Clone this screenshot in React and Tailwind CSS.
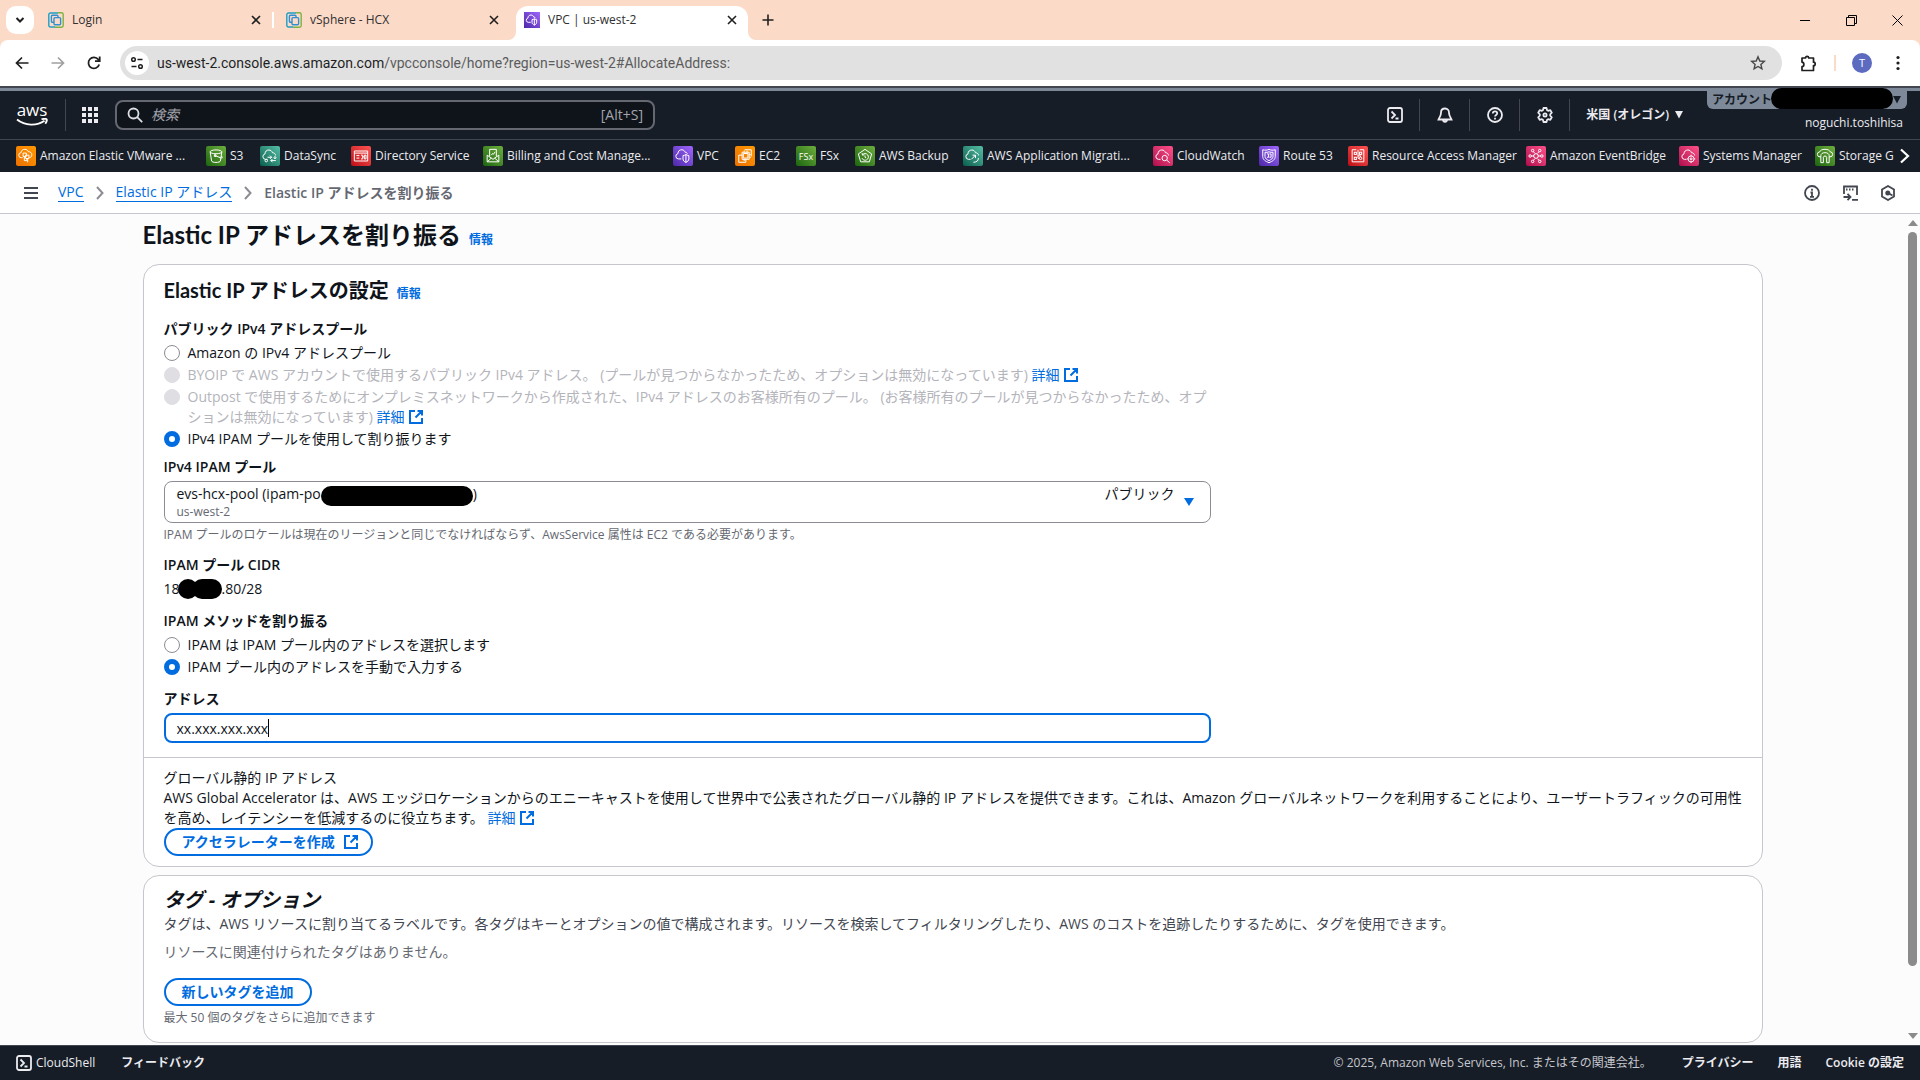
import React from "react";

const BODY_FONT = "font-['Open_Sans','Noto_Sans_CJK_JP',sans-serif]";

/* ---------- small shared drawings ---------- */

function External({ className = "" }) {
  return (
    <svg viewBox="0 0 16 16" className={"inline-block size-4 " + className} fill="none" stroke="currentColor" strokeWidth="2" aria-hidden="true">
      <path d="M7 2H2v12h12V9M9.5 2H14v4.5M14 2 7.5 8.5" />
    </svg>
  );
}

function Close() {
  return (
    <svg viewBox="0 0 10 10" className="size-2.5" fill="none" stroke="#1f1f1f" strokeWidth="1.6" aria-hidden="true">
      <path d="M1 1l8 8M9 1 1 9" />
    </svg>
  );
}

function VmIcon() {
  return (
    <svg viewBox="0 0 16 16" className="size-4 shrink-0" fill="none" strokeWidth="1.4" aria-hidden="true">
      <path d="M10 1H2.5A1.7 1.7 0 0 0 .8 2.7v10.6A1.7 1.7 0 0 0 2.5 15H7" stroke="#1d9fc4" />
      <path d="M10 .8h3.5a1.7 1.7 0 0 1 1.7 1.7v11a1.7 1.7 0 0 1-1.7 1.7H7" stroke="#7cb342" />
      <rect x="3.4" y="3.2" width="6.6" height="7" rx="1" stroke="#2f8fd0" />
      <rect x="6" y="5.6" width="6.6" height="7.2" rx="1" stroke="#2f8fd0" fill="#fcdac8" />
    </svg>
  );
}

function VpcGlyph() {
  return (
    <>
      <path d="M10 15.5H6.4a3.2 3.2 0 0 1-.5-6.3C5.9 6 8 4.5 10.5 4.5c2 0 3.5 1.2 4 3 1.3 0 2.4.7 2.9 1.8" />
      <path d="M12 11.5c1.6-.2 2.7-.6 3.5-1.3.8.7 1.9 1.1 3.5 1.3v4c0 2-1.6 3.3-3.5 4.2-1.9-.9-3.5-2.2-3.5-4.2zM15.5 10.2v9.5" />
    </>
  );
}

const CLOUD = "M9 16H6.6a3.3 3.3 0 0 1-.6-6.5C6 6.5 8.1 4.8 10.6 4.8c2.1 0 3.7 1.2 4.3 3.2 2.3.1 3.6 1.5 3.8 3.3";

const glyphs = {
  evs: (
    <>
      <path d="M8 14H6.5a3 3 0 0 1-.4-6C6.3 5.3 8.2 4 10.6 4c2 0 3.5 1 4.1 2.8 2.6 0 4.3 1.5 4.3 3.7 0 2-1.3 3.4-3 3.5" />
      <path d="M8.5 8.5h4v4h-4zM11.5 11h4v4h-4zM10 12.5v5h3v-2.5M14 15v4.5" />
    </>
  ),
  s3: (
    <>
      <ellipse cx="12" cy="7" rx="7" ry="2.3" />
      <path d="M5 7l1.7 11c.2 1 2.5 1.7 5.3 1.7s5.1-.7 5.3-1.7L19 7M11 11.5l6 2.5c2 .7 3 .5 2.5-.5L18.5 12M10 10.5h2v2h-2z" />
    </>
  ),
  datasync: (
    <>
      <path d={CLOUD} />
      <path d="M9 13.5h5M12 11.5l2 2-2 2M19 17.5h-6M15 15.5l-2 2 2 2" />
      <circle cx="7.5" cy="17.5" r="1.5" />
      <circle cx="18" cy="14" r="1.2" />
    </>
  ),
  directory: (
    <>
      <path d="M4 6h16v12H4zM4 8.5h16M6.5 11.5h3.5M6.5 14.5h3.5" />
      <path d="M12 11h2v4.5h-2M16 11h2v4.5h-2zM14 13h2" />
    </>
  ),
  billing: (
    <>
      <path d="M5 11v8h14v-8l-7 5zM5 19l5-4.5M19 19l-5-4.5M8 12.5V4h8v8.5" />
      <path d="M10 11l1.5-2 1 1L14.5 7" />
    </>
  ),
  vpc: <VpcGlyph />,
  ec2: (
    <>
      <path d="M10 9h5.5v5.5H10zM8.5 7.5H17V16H8.5z" />
      <path d="M11 7.5v-2M14.5 7.5v-2M11 18v-2M17 10.5h2M17 13.5h2M11.5 4.5h8v8M13 16v3.5H4.5V11h4" />
    </>
  ),
  backup: (
    <>
      <path d="M12 4l8 5.5-2.8 9.5H6.8L4 9.5z" />
      <path d="M9 10.5a4 4 0 1 1-.7 4M8.5 8.5l.4 2.4 2.4-.3M12 11.5v2l1.3.8" />
    </>
  ),
  migration: (
    <>
      <path d={CLOUD} />
      <path d="M10 16l5-5M11.5 11H15v3.5M12.5 19.5c3.5 0 6-1.5 6-5" />
    </>
  ),
  cloudwatch: (
    <>
      <path d={CLOUD} />
      <circle cx="14" cy="14.5" r="3.2" />
      <path d="M16.5 17l3.5 3" />
    </>
  ),
  route53: (
    <>
      <path d="M12 4c2.2 1.2 5 1.3 7.5.5v8c0 4-3.5 6-7.5 7.5-4-1.5-7.5-3.5-7.5-7.5v-8C7 5.3 9.8 5.2 12 4z" />
      <path d="M12 7c1.5.6 3.2.8 4.8.5v5c0 2.5-2 3.8-4.8 5-2.8-1.2-4.8-2.5-4.8-5v-5c1.6.3 3.3.1 4.8-.5zM9.5 9.5h2v4h-2M12.5 9.5h2v4h-2" />
    </>
  ),
  ram: (
    <>
      <path d="M10 4.5H5v14.5h14V4.5h-5" />
      <rect x="7.5" y="7.5" width="2.6" height="2.6" />
      <rect x="13.8" y="7.5" width="2.6" height="2.6" />
      <rect x="7.5" y="13.5" width="2.6" height="2.6" />
      <circle cx="15" cy="14.8" r="1.5" />
      <path d="M12 4.5v10M12 14.8h1.5M12 11.8h3v1.5" />
    </>
  ),
  eventbridge: (
    <>
      <path d="M12 9l2.6 1.5v3L12 15l-2.6-1.5v-3z" />
      <circle cx="8" cy="5.5" r="1.5" />
      <circle cx="16.5" cy="5.5" r="1.5" />
      <circle cx="5" cy="12" r="1.5" />
      <circle cx="19" cy="12" r="1.5" />
      <circle cx="8" cy="18.5" r="1.5" />
      <circle cx="16.5" cy="18.5" r="1.5" />
      <path d="M9 6.8l1.5 2M15.5 6.8l-1.5 2M6.5 12h3M14.6 12h3M9 17.2l1.5-2M15.5 17.2l-1.5-2" />
    </>
  ),
  systems: (
    <>
      <path d={CLOUD} />
      <circle cx="14.5" cy="15.5" r="3.6" />
      <circle cx="14.5" cy="15.5" r="1.2" />
      <path d="M14.5 10.5V12M14.5 19v1.5M9.5 15.5H11M18 15.5h1.5" />
    </>
  ),
  storage: (
    <>
      <path d="M7 13H6a3 3 0 0 1-.3-6C6.5 5 8.5 4 12 4s5.5 1 6.3 3a3 3 0 0 1-.3 6h-1" />
      <path d="M7 20v-8.5C7 9.5 9 8 12 8s5 1.5 5 3.5V20h-3v-6.5c0-2-4-2-4 0V20z" />
    </>
  ),
};

const orange = "bg-linear-to-tr from-[#ed7100] to-[#ff9900]";
const green = "bg-linear-to-tr from-[#1b660f] to-[#6cae3e]";
const teal = "bg-linear-to-tr from-[#055f4e] to-[#56c0a7]";
const red = "bg-linear-to-tr from-[#bd0816] to-[#ff5252]";
const purple = "bg-linear-to-tr from-[#4d27a8] to-[#a166ff]";
const pink = "bg-linear-to-tr from-[#b0084d] to-[#ff4f8b]";

const favorites = [
  { name: "Amazon Elastic VMware ...", icon: "evs", color: orange, width: "w-[174px]" },
  { name: "S3", icon: "s3", color: green, width: "w-[38px]" },
  { name: "DataSync", icon: "datasync", color: teal, width: "w-[75px]" },
  { name: "Directory Service", icon: "directory", color: red, width: "w-[116px]" },
  { name: "Billing and Cost Manage...", icon: "billing", color: green, width: "w-[174px]" },
  { name: "VPC", icon: "vpc", color: purple, width: "w-[46px]" },
  { name: "EC2", icon: "ec2", color: orange, width: "w-[45px]" },
  { name: "FSx", icon: "fsx", color: green, width: "w-[43px]" },
  { name: "AWS Backup", icon: "backup", color: green, width: "w-[92px]" },
  { name: "AWS Application Migrati...", icon: "migration", color: teal, width: "w-[174px]" },
  { name: "CloudWatch", icon: "cloudwatch", color: pink, width: "w-[90px]" },
  { name: "Route 53", icon: "route53", color: purple, width: "w-[73px]" },
  { name: "Resource Access Manager", icon: "ram", color: red, width: "w-[162px]" },
  { name: "Amazon EventBridge", icon: "eventbridge", color: pink, width: "w-[137px]" },
  { name: "Systems Manager", icon: "systems", color: pink, width: "w-[120px]" },
  { name: "Storage G", icon: "storage", color: green, width: "w-[77px]" },
];

/* ---------- browser chrome ---------- */

function Tab({ title, icon, active }) {
  return (
    <div className={"flex h-full w-[232px] items-center gap-2 pl-2 pr-[11px] " + (active ? "rounded-t-xl bg-white pb-1.5" : "")}>
      {icon}
      <span className="flex-1 truncate text-xs text-[#303030]">{title}</span>
      <button aria-label={"Close " + title}>
        <Close />
      </button>
    </div>
  );
}

function BrowserChrome() {
  return (
    <div className="bg-[#fcdac8] font-['Open_Sans',sans-serif]">
      <div className="flex h-10 items-stretch pl-1.5 pt-1.5">
        <button aria-label="Search tabs" className="flex size-7 items-center justify-center rounded-[10px] bg-white">
          <svg viewBox="0 0 10 10" className="size-2.5" fill="none" stroke="#1f1f1f" strokeWidth="2">
            <path d="M1.5 3 5 6.5 8.5 3" />
          </svg>
        </button>
        <div className="ml-1.5 flex">
          <div className="flex h-7">
            <Tab title="Login" icon={<VmIcon />} />
          </div>
          <span className="mt-1.5 h-4 w-0.5 bg-white" />
          <div className="ml-1 mr-1.5 flex h-7">
            <Tab title="vSphere - HCX" icon={<VmIcon />} />
          </div>
          <div className="relative h-[34px]">
            <svg viewBox="0 0 8 8" className="absolute bottom-0 right-full size-2" fill="white">
              <path d="M8 0v8H0a8 8 0 0 0 8-8z" />
            </svg>
            <Tab
              title="VPC | us-west-2"
              active
              icon={
                <svg viewBox="0 0 24 24" className="size-4 shrink-0 bg-linear-to-tr from-[#4d27a8] to-[#a166ff]" fill="none" stroke="white" strokeWidth="1.5">
                  <VpcGlyph />
                </svg>
              }
            />
            <svg viewBox="0 0 8 8" className="absolute bottom-0 left-full size-2" fill="white">
              <path d="M0 0v8h8a8 8 0 0 1-8-8z" />
            </svg>
          </div>
        </div>
        <button aria-label="New tab" className="flex h-7 w-10 items-center justify-center">
          <svg viewBox="0 0 12 12" className="size-3" stroke="#1f1f1f" strokeWidth="1.6">
            <path d="M6 .5v11M.5 6h11" />
          </svg>
        </button>
        <div className="ml-auto flex h-7 items-center text-black">
          <button aria-label="Minimize" className="flex w-[46px] justify-center">
            <svg viewBox="0 0 10 10" className="size-2.5" stroke="currentColor">
              <path d="M0 5.5h10" />
            </svg>
          </button>
          <button aria-label="Restore" className="flex w-[46px] justify-center">
            <svg viewBox="0 0 11 11" className="size-[11px]" fill="none" stroke="currentColor">
              <path d="M.5 2.5h8v8h-8zM2.5 2.5v-2h8v8h-2" />
            </svg>
          </button>
          <button aria-label="Close window" className="flex w-[46px] justify-center">
            <svg viewBox="0 0 11 11" className="size-[11px]" stroke="currentColor">
              <path d="M.5.5l10 10M10.5.5l-10 10" />
            </svg>
          </button>
        </div>
      </div>
      <div className="flex h-[46px] items-center rounded-t-lg bg-white px-3">
        <button aria-label="Back" className="flex w-5 justify-center">
          <svg viewBox="0 0 14 14" className="size-3.5" fill="none" stroke="#1f1f1f" strokeWidth="1.7">
            <path d="M13.5 7h-12M7 1.5 1.5 7 7 12.5" />
          </svg>
        </button>
        <button aria-label="Forward" className="ml-4 flex w-5 justify-center">
          <svg viewBox="0 0 14 14" className="size-3.5" fill="none" stroke="#a0a0a0" strokeWidth="1.7">
            <path d="M.5 7h12M7 1.5 12.5 7 7 12.5" />
          </svg>
        </button>
        <button aria-label="Reload" className="ml-4 flex w-5 justify-center">
          <svg viewBox="0 0 14 14" className="size-3.5" fill="none" stroke="#1f1f1f" strokeWidth="1.8">
            <path d="M12.2 8.5A5.5 5.5 0 1 1 11.3 3.5L12.6 5M12.7.5V5.2H8" />
          </svg>
        </button>
        <div className="ml-4 flex h-[34px] flex-1 items-center rounded-full bg-[#e1e1e1] pl-[5px] pr-4">
          <button aria-label="Site information" className="flex size-6 items-center justify-center rounded-full bg-white">
            <svg viewBox="0 0 14 14" className="size-3.5" fill="none" stroke="#1f1f1f" strokeWidth="1.5">
              <circle cx="3.5" cy="3.5" r="1.8" />
              <path d="M7.5 3.5h5M1.5 10.5h5" />
              <circle cx="10.5" cy="10.5" r="1.8" />
            </svg>
          </button>
          <p className="ml-2 flex-1 font-['Roboto',sans-serif] text-sm text-[#5c5c5c]">
            <span className="text-[#1f1f1f]">us-west-2.console.aws.amazon.com</span>/vpcconsole/home?region=us-west-2#AllocateAddress:
          </p>
          <button aria-label="Bookmark">
            <svg viewBox="0 0 16 16" className="size-4" fill="none" stroke="#474747" strokeWidth="1.4">
              <path d="M8 1.8l1.8 4.2 4.5.4-3.4 3 1 4.4L8 11.5l-3.9 2.3 1-4.4-3.4-3 4.5-.4z" />
            </svg>
          </button>
        </div>
        <button aria-label="Extensions" className="ml-[18px]">
          <svg viewBox="0 0 17 17" className="size-[17px]" fill="none" stroke="#1f1f1f" strokeWidth="1.7" strokeLinejoin="round">
            <path d="M2 3h3.5a1.6 1.6 0 0 1 3.2 0H13.5v4.2a1.7 1.7 0 0 1 0 3.4V15.5H2v-3.8c2.5-.3 2.5-4.2 0-4.5z" />
          </svg>
        </button>
        <span className="ml-[17px] h-4 w-0.5 bg-[#fcdac8]" />
        <button aria-label="Profile" className="ml-4 flex size-5 items-center justify-center rounded-full bg-[#5c6bc0] text-[11px] text-white">
          T
        </button>
        <button aria-label="Menu" className="ml-4 flex w-5 justify-center">
          <svg viewBox="0 0 4 16" className="h-4 w-1" fill="#1f1f1f">
            <circle cx="2" cy="2.5" r="1.6" />
            <circle cx="2" cy="8" r="1.6" />
            <circle cx="2" cy="13.5" r="1.6" />
          </svg>
        </button>
      </div>
    </div>
  );
}

/* ---------- console header ---------- */

function HeaderIcon({ label, children }) {
  return (
    <div className="flex h-8 items-center border-r border-[#424650]">
      <button aria-label={label} className="flex w-[49px] justify-center">
        <svg viewBox="0 0 16 16" className="size-4" fill="none" stroke="#ebebf0" strokeWidth="1.8">
          {children}
        </svg>
      </button>
    </div>
  );
}

function ConsoleHeader() {
  return (
    <header className="bg-[#161d26] text-[#ebebf0]">
      <div className="h-0.5 bg-[#424650]" />
      <div className="h-[3px] bg-[#7d8998]" />
      <div className="flex h-12 items-center">
        <a href="#home" aria-label="aws" className="ml-4 flex h-full w-8 flex-col items-center justify-center">
          <span className="h-3.5 text-[17px] leading-3 text-white">aws</span>
          <svg viewBox="0 0 32 8" className="h-2 w-8" fill="none" stroke="white" strokeWidth="1.8">
            <path d="M1 1.5c8 6.5 20 6.5 27.5 1.2M25.5 1.2c2.5-.5 4.5-.5 5 0s0 2.8-1.2 4.5" />
          </svg>
        </a>
        <span className="ml-[17px] h-8 w-px bg-[#424650]" />
        <button aria-label="Services" className="ml-4 flex w-4">
          <svg viewBox="0 0 16 16" className="size-4" fill="#ebebf0">
            <path d="M0 0h4v4H0zM6 0h4v4H6zM12 0h4v4h-4zM0 6h4v4H0zM6 6h4v4H6zM12 6h4v4h-4zM0 12h4v4H0zM6 12h4v4H6zM12 12h4v4h-4z" />
          </svg>
        </button>
        <label className="ml-[17px] flex h-[30px] w-[540px] items-center rounded-lg border-2 border-[#656871] bg-[#0f141a] px-2.5">
          <svg viewBox="0 0 16 16" className="size-4" fill="none" stroke="#dedee3" strokeWidth="1.8">
            <circle cx="6.5" cy="6.5" r="5" />
            <path d="M10.2 10.2l5 5" />
          </svg>
          <input
            aria-label="検索"
            placeholder="検索"
            className="ml-2 min-w-0 flex-1 bg-transparent text-sm italic outline-none placeholder:text-[#a4a4ad]"
          />
          <span className="text-sm text-[#a4a4ad]">[Alt+S]</span>
        </label>
        <div className="ml-auto flex items-center">
          <HeaderIcon label="CloudShell">
            <rect x="1" y="1" width="14" height="14" rx="2" />
            <path d="M4.5 4.5 8 8l-3.5 3.5M8.5 11.5h3" />
          </HeaderIcon>
          <HeaderIcon label="通知">
            <path d="M8 1.5c-2.7 0-4 1.9-4 4.2C4 9 2.5 10 1.5 12.5h13C13.5 10 12 9 12 5.7c0-2.3-1.3-4.2-4-4.2zM6 12.5c0 3 4 3 4 0" />
          </HeaderIcon>
          <HeaderIcon label="ヘルプ">
            <circle cx="8" cy="8" r="7" />
            <path d="M5.8 6.5c0-3 4.4-2.8 4.4-.2C10.2 8 8 7.8 8 9.6M8 10.8v1.7" />
          </HeaderIcon>
          <HeaderIcon label="設定">
            <path d="M6.5 1h3l.6 2.2 1 .6 2.2-.7 1.5 2.6L13.2 7.3v1.4l1.6 1.6-1.5 2.6-2.2-.7-1 .6L9.5 15h-3l-.6-2.2-1-.6-2.2.7L1.2 10.3l1.6-1.6V7.3L1.2 5.7l1.5-2.6 2.2.7 1-.6z" strokeLinejoin="round" />
            <circle cx="8" cy="8" r="1.6" />
          </HeaderIcon>
          <button className="ml-4 flex items-center gap-1.5 whitespace-nowrap text-xs font-semibold">
            米国 (オレゴン)
            <svg viewBox="0 0 8 8" className="size-2" fill="currentColor">
              <path d="M0 0h8L4 7.5z" />
            </svg>
          </button>
        </div>
        <div className="ml-6 mr-[13px] flex h-12 w-[200px] flex-col items-end">
          <button className="relative flex h-[18px] w-full items-center justify-between rounded-b-md bg-[#7d8998] pl-[5px] pr-1.5 text-xs font-semibold text-[#161d26]">
            アカウント
            <svg viewBox="0 0 8 8" className="size-2" fill="currentColor">
              <path d="M0 0h8L4 7.5z" />
            </svg>
            <span className="absolute -top-[3px] bottom-0 left-16 right-3.5 rounded-full bg-black" />
          </button>
          <span className="mr-1 mt-1.5 text-xs leading-4">noguchi.toshihisa</span>
        </div>
      </div>
      <nav className="flex h-[33px] items-center overflow-hidden border-t border-[#424650] pl-4 pr-2.5">
        <ul className="flex min-w-0 flex-1 items-center gap-4 overflow-hidden">
          {favorites.map((f) => (
            <li key={f.name} className={"shrink-0 " + f.width}>
              <a href={"#" + f.icon} className="flex items-center gap-1 whitespace-nowrap text-xs text-[#ebebf0]">
                <span className={"flex size-5 shrink-0 items-center justify-center rounded-[2px] " + f.color}>
                  {f.icon === "fsx" ? (
                    <span className="text-[9px] leading-none text-white">FSx</span>
                  ) : (
                    <svg viewBox="0 0 24 24" className="size-5" fill="none" stroke="white" strokeWidth="1.2">
                      {glyphs[f.icon]}
                    </svg>
                  )}
                </span>
                {f.name}
              </a>
            </li>
          ))}
        </ul>
        <button aria-label="次へ">
          <svg viewBox="0 0 10 16" className="h-4 w-2.5" fill="none" stroke="white" strokeWidth="2.2">
            <path d="M1 1.5 8 8l-7 6.5" />
          </svg>
        </button>
      </nav>
    </header>
  );
}

/* ---------- page parts ---------- */

function Chevron() {
  return (
    <svg viewBox="0 0 8 14" className="h-3.5 w-2" fill="none" stroke="#8c8c94" strokeWidth="2" aria-hidden="true">
      <path d="M1 1l5.5 6L1 13" />
    </svg>
  );
}

function Breadcrumbs() {
  return (
    <div className="flex h-[42px] items-center border-b border-[#c6c6cd] bg-white px-6 text-sm">
      <button aria-label="メニュー">
        <svg viewBox="0 0 14 12" className="h-3 w-3.5" stroke="#424650" strokeWidth="2">
          <path d="M0 1h14M0 6h14M0 11h14" />
        </svg>
      </button>
      <nav className="ml-5 flex items-center gap-3" aria-label="パンくず">
        <a href="#vpc" className="border-b border-[#006ce0] leading-[18px] text-[#006ce0]">VPC</a>
        <Chevron />
        <a href="#eip" className="border-b border-[#006ce0] leading-[18px] text-[#006ce0]">Elastic IP アドレス</a>
        <Chevron />
        <span className="font-semibold text-[#656871]">Elastic IP アドレスを割り振る</span>
      </nav>
      <div className="ml-auto flex items-center gap-[22px]">
        <button aria-label="情報パネル">
          <svg viewBox="0 0 16 16" className="size-4" fill="none" stroke="#424650" strokeWidth="1.8">
            <circle cx="8" cy="8" r="7" />
            <path d="M6.5 7.5H8v4M6 11.8h4M8 3.8v1.9" />
          </svg>
        </button>
        <button aria-label="ツール">
          <svg viewBox="0 0 16 16" className="size-4" fill="none" stroke="#424650" strokeWidth="1.8">
            <path d="M2 9V1.5h13V10M1.5 12H8M5.5 8.8 8.5 12l-3 3.2M10 14.8h6M4 4.5h1.5M7 4.5h1.5M10 4.5h1.5" />
          </svg>
        </button>
        <button aria-label="診断">
          <svg viewBox="0 0 16 16" className="size-4" fill="none" stroke="#424650" strokeWidth="1.8">
            <path d="M8 1l6 3.5v7L8 15l-6-3.5v-7z" />
            <circle cx="7.8" cy="8" r="1.6" fill="#424650" />
            <path d="M8 8l4.5 2.5" />
          </svg>
        </button>
      </div>
    </div>
  );
}

function Info() {
  return (
    <a href="#info" className="text-xs font-bold text-[#006ce0]">
      情報
    </a>
  );
}

function More() {
  return (
    <a href="#details" className="whitespace-nowrap text-[#006ce0]">
      詳細 <External className="-mt-0.5" />
    </a>
  );
}

function Option({ name, checked, disabled, children }) {
  const look = disabled
    ? "border border-[#dedee3] bg-[#dedee3]"
    : checked
      ? "border-5 border-[#006ce0] bg-white"
      : "border border-[#8c8c94] bg-white";
  return (
    <label className={"flex gap-2 " + (disabled ? "text-[#b4b4bb]" : "")}>
      <input type="radio" name={name} defaultChecked={checked} disabled={disabled} className={"mt-0.5 size-4 shrink-0 appearance-none rounded-full " + look} />
      <span>{children}</span>
    </label>
  );
}

function Settings() {
  return (
    <section className="mt-3.5 rounded-2xl border border-[#c6c6cd] bg-white">
      <div className="px-5 pb-3.5 pt-[13px]">
        <div className="flex items-baseline gap-2">
          <h2 className="font-['Lato','Noto_Sans_CJK_JP',sans-serif] text-xl leading-6 font-bold">Elastic IP アドレスの設定</h2>
          <Info />
        </div>
        <div className="w-2/3 pr-1">
          <fieldset className="mt-[17px]">
            <legend className="font-semibold">パブリック IPv4 アドレスプール</legend>
            <div className="mt-1 flex flex-col gap-0.5">
              <Option name="pool">Amazon の IPv4 アドレスプール</Option>
              <Option name="pool" disabled>
                BYOIP で AWS アカウントで使用するパブリック IPv4 アドレス。 (プールが見つからなかったため、オプションは無効になっています) <More />
              </Option>
              <Option name="pool" disabled>
                Outpost で使用するためにオンプレミスネットワークから作成された、IPv4 アドレスのお客様所有のプール。 (お客様所有のプールが見つからなかったため、オプションは無効になっています) <More />
              </Option>
              <Option name="pool" checked>IPv4 IPAM プールを使用して割り振ります</Option>
            </div>
          </fieldset>

          <p id="ipam-pool" className="mt-2 font-semibold">IPv4 IPAM プール</p>
          <button aria-labelledby="ipam-pool" aria-haspopup="listbox" className="mt-1 flex h-[42px] w-full items-center rounded-lg border border-[#8c8c94] bg-white pl-3 pr-4 text-left">
            <span className="flex-1">
              <span className="flex h-5 items-center leading-5">
                evs-hcx-pool (ipam-po
                <span className="mt-1 h-5 w-[152px] rounded-full bg-black" />)
              </span>
              <span className="block text-xs leading-4 text-[#656871]">us-west-2</span>
            </span>
            <span className="self-start pt-0.5">パブリック</span>
            <svg viewBox="0 0 10 8" className="ml-2.5 h-2 w-2.5" fill="#006ce0">
              <path d="M0 0h10L5 8z" />
            </svg>
          </button>
          <p className="mt-1 text-xs leading-4 text-[#656871]">IPAM プールのロケールは現在のリージョンと同じでなければならず、AwsService 属性は EC2 である必要があります。</p>

          <p className="mt-3 font-semibold">IPAM プール CIDR</p>
          <p className="mt-1 flex items-center">
            18
            <span className="-ml-0.5 size-5 rounded-full bg-black" />
            <span className="-ml-1.5 h-5 w-[30px] rounded-full bg-black" />
            .80/28
          </p>

          <fieldset className="mt-3">
            <legend className="font-semibold">IPAM メソッドを割り振る</legend>
            <div className="mt-1 flex flex-col gap-0.5">
              <Option name="method">IPAM は IPAM プール内のアドレスを選択します</Option>
              <Option name="method" checked>IPAM プール内のアドレスを手動で入力する</Option>
            </div>
          </fieldset>

          <label htmlFor="address" className="mt-3 block font-semibold">アドレス</label>
          <div className="relative mt-1">
            <input id="address" defaultValue="xx.xxx.xxx.xxx" className="block h-[30px] w-full rounded-lg border-2 border-[#006ce0] bg-white px-[11px] outline-none" />
            <span className="absolute left-[104px] top-1.5 h-[18px] w-px bg-black" aria-hidden="true" />
          </div>
        </div>
      </div>

      <div className="border-t border-[#c6c6cd] pb-2.5 pl-5 pr-4 pt-2.5">
        <p>グローバル静的 IP アドレス</p>
        <p>
          AWS Global Accelerator は、AWS エッジロケーションからのエニーキャストを使用して世界中で公表されたグローバル静的 IP アドレスを提供できます。これは、Amazon グローバルネットワークを利用することにより、ユーザートラフィックの可用性を高め、レイテンシーを低減するのに役立ちます。 <More />
        </p>
        <a href="#accelerator" className="flex h-7 w-fit items-center gap-2 rounded-full border-2 border-[#006ce0] pl-4 pr-3 font-bold text-[#006ce0]">
          アクセラレーターを作成
          <External />
        </a>
      </div>
    </section>
  );
}

function Tags() {
  return (
    <section className="mt-2 rounded-2xl border border-[#c6c6cd] bg-white px-5 pb-4 pt-3">
      <h2 className="text-xl leading-6 font-bold italic">タグ - オプション</h2>
      <p className="mt-0.5 text-[#424650]">
        タグは、AWS リソースに割り当てるラベルです。各タグはキーとオプションの値で構成されます。リソースを検索してフィルタリングしたり、AWS のコストを追跡したりするために、タグを使用できます。
      </p>
      <p className="mt-2 text-[#656871]">リソースに関連付けられたタグはありません。</p>
      <button className="mt-4 flex h-7 items-center rounded-full border-2 border-[#006ce0] px-4 font-bold text-[#006ce0]">新しいタグを追加</button>
      <p className="mt-1 text-xs leading-4 text-[#656871]">最大 50 個のタグをさらに追加できます</p>
    </section>
  );
}

function Footer() {
  return (
    <footer className="flex h-[35px] items-center border-t border-[#424650] bg-[#161d26] px-4 text-xs text-[#ebebf0]">
      <button className="flex items-center gap-1 font-medium">
        <svg viewBox="0 0 16 16" className="size-4" fill="none" stroke="currentColor" strokeWidth="1.8">
          <rect x="1" y="1" width="14" height="14" rx="2" />
          <path d="M4.5 4.5 8 8l-3.5 3.5M8.5 11.5h3" />
        </svg>
        CloudShell
      </button>
      <a href="#feedback" className="ml-[26px] font-semibold">フィードバック</a>
      <span className="ml-auto text-[#c6c6cd]">© 2025, Amazon Web Services, Inc. またはその関連会社。</span>
      <nav className="ml-[30px] flex gap-6 font-semibold">
        <a href="#privacy">プライバシー</a>
        <a href="#terms">用語</a>
        <a href="#cookies">Cookie の設定</a>
      </nav>
    </footer>
  );
}

export default function App() {
  return (
    <div lang="ja" className={"flex min-h-screen flex-col bg-[#fcfcfd] text-sm text-[#0f141a] " + BODY_FONT}>
      <BrowserChrome />
      <ConsoleHeader />
      <Breadcrumbs />
      <div className="flex flex-1">
        <main className="min-w-0 flex-1 px-6 pt-1.5">
          <div className="mx-auto max-w-[1620px]">
            <div className="flex items-baseline gap-2">
              <h1 className="font-['Lato','Noto_Sans_CJK_JP',sans-serif] text-2xl leading-[30px] font-bold">Elastic IP アドレスを割り振る</h1>
              <Info />
            </div>
            <Settings />
            <Tags />
          </div>
        </main>
        <div className="flex w-[15px] flex-col items-center py-1.5" aria-hidden="true">
          <svg viewBox="0 0 10 6" className="h-1.5 w-2.5" fill="#8b8b8b">
            <path d="M5 0l5 6H0z" />
          </svg>
          <div className="mt-1.5 flex flex-1 flex-col">
            <span className="w-[9px] flex-[11] rounded-full bg-[#8b8b8b]" />
            <span className="flex-1" />
          </div>
          <svg viewBox="0 0 10 6" className="h-1.5 w-2.5" fill="#8b8b8b">
            <path d="M0 0h10L5 6z" />
          </svg>
        </div>
      </div>
      <Footer />
    </div>
  );
}
